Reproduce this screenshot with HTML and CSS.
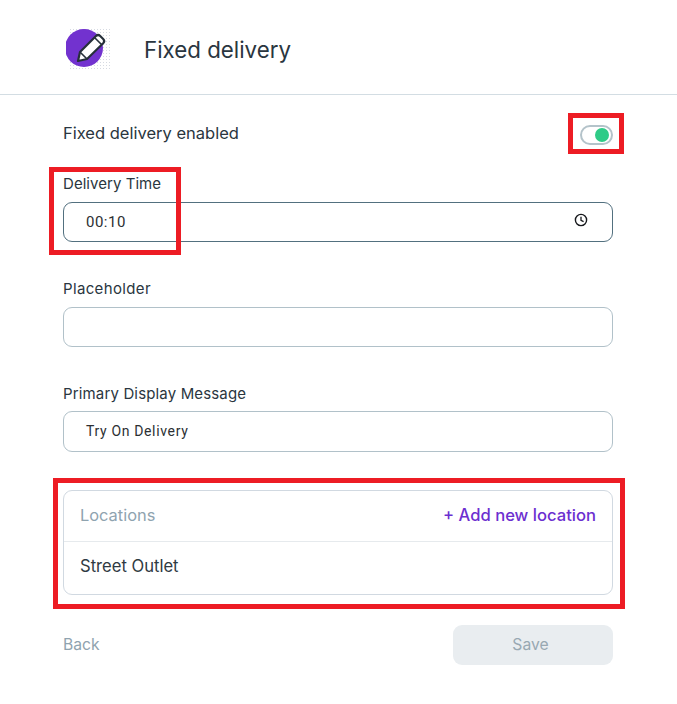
FILE: index.html
```html
<!DOCTYPE html>
<html lang="en">
<head>
<meta charset="utf-8">
<title>Fixed delivery</title>
<link rel="stylesheet" href="styles.css">
</head>
<body>
<div class="page">
  <header class="header">
    <svg class="logo" width="46" height="46" viewBox="0 0 46 46" aria-hidden="true">
      <defs>
        <pattern id="dots" width="3" height="3" patternUnits="userSpaceOnUse">
          <rect x="1" y="1" width="1" height="1" fill="#d6dae2"/>
        </pattern>
      </defs>
      <rect x="3" y="2" width="43" height="43" fill="url(#dots)"/>
      <circle cx="18" cy="23" r="19" fill="#7232cf"/>
      <path d="M14 27 L30 11 a3 3 0 0 1 4.200 0 l3 3 a3 3 0 0 1 0 4.200 L21 34 L12 36 Z" fill="#fff" stroke="#26303a" stroke-width="2.200" stroke-linejoin="round"/>
      <path d="M28.500 12.500 L35.500 19.500 M14 27 L21 34" fill="none" stroke="#26303a" stroke-width="1.600"/>
    </svg>
    <h1 class="title">Fixed delivery</h1>
  </header>
  <main class="form">
    <div class="toggle-row">
      <span class="toggle-label">Fixed delivery enabled</span>
      <span class="toggle"><span class="knob"></span></span>
    </div>
    <div class="field field-time">
      <label class="label">Delivery Time</label>
      <div class="input input-active">
        <span class="value">00:10</span>
        <svg class="clock" width="14" height="14" viewBox="0 0 14 14" aria-hidden="true">
          <circle cx="7" cy="7" r="5.600" fill="none" stroke="#16181c" stroke-width="1.400"/>
          <path d="M7 3.800 V7.300 L9.600 8.600" fill="none" stroke="#16181c" stroke-width="1.300"/>
        </svg>
      </div>
    </div>
    <div class="field field-placeholder">
      <label class="label label-wide">Placeholder</label>
      <div class="input"></div>
    </div>
    <div class="field field-message">
      <label class="label">Primary Display Message</label>
      <div class="input input-tall"><span class="value value-small">Try On Delivery</span></div>
    </div>
    <section class="card">
      <div class="card-head">
        <span class="card-title">Locations</span>
        <a class="add-link">+ Add new location</a>
      </div>
      <div class="card-row">Street Outlet</div>
    </section>
    <div class="actions">
      <a class="back">Back</a>
      <button class="save" type="button">Save</button>
    </div>
  </main>
  <div class="mark mark-toggle"></div>
  <div class="mark mark-time"></div>
  <div class="mark mark-locations"></div>
</div>
</body>
</html>
```
FILE: styles.css
```css
* { box-sizing: border-box; }
html, body { margin: 0; padding: 0; background: #fff; }
body { font-family: "Inter", "Liberation Sans", sans-serif; color: #26323c; }
.page { position: relative; width: 677px; height: 704px; overflow: hidden; }
.header {
  height: 95px;
  border-bottom: 1px solid #d3dde3;
  padding: 25px 0 0 66px;
  display: flex;
  align-items: flex-start;
}
.logo { flex: none; display: block; }
.title { margin: 9px 0 0 32px; font-size: 22.3px; line-height: 32px; font-weight: 400; color: #2a3640; }
.form { padding: 0 64px 0 63px; }
.toggle-row { height: 38px; margin-top: 20px; display: flex; justify-content: space-between; align-items: flex-start; }
.toggle-label { font-size: 16.5px; line-height: 36px; color: #2a3640; }
.toggle {
  width: 33px; height: 20px; margin: 10px 0 0 0;
  border: 2px solid #b4c3ca; border-radius: 10px; display: flex; align-items: center; justify-content: flex-end; padding-right: 2px;
}
.knob { width: 14px; height: 14px; border-radius: 50%; background: #2fcb87; }
.field { display: flex; flex-direction: column; }
.field-time { margin-top: 21px; }
.field-placeholder { margin-top: 37px; }
.field-message { margin-top: 37px; }
.label { font-size: 15px; letter-spacing: .05px; line-height: 20px; height: 20px; margin-bottom: 8px; color: #2a3640; }
.label-wide { letter-spacing: .35px; }
.field-message .label { margin-bottom: 7px; letter-spacing: .15px; }
.input {
  height: 40px; border: 1px solid #b1c1c9; border-radius: 9px;
  padding: 0 24px 0 22px; display: flex; align-items: center; justify-content: space-between;
}
.input-tall { height: 41px; padding-bottom: 2px; }
.input-active { border-color: #52707f; }
.clock { margin-top: -4px; }
.value { font-family: "Roboto", "Liberation Sans", sans-serif; font-size: 15px; letter-spacing: .5px; color: #2c2f33; }
.value-small { font-size: 14px; letter-spacing: .65px; }
.card { margin-top: 38px; height: 105px; border: 1px solid #d1d9e1; border-radius: 9px; }
.card-head {
  height: 51px; border-bottom: 1px solid #e6eaed; padding: 0 16px 2px;
  display: flex; justify-content: space-between; align-items: center;
}
.card-title { font-size: 16.4px; color: #8fa3af; }
.add-link { font-size: 16.6px; font-weight: 500; color: #6c2fd0; }
.card-row { padding: 0 16px 2px; height: 50px; display: flex; align-items: center; font-size: 16.6px; color: #2f3a42; }
.actions { margin-top: 30px; display: flex; justify-content: space-between; align-items: center; }
.back { font-size: 15.7px; color: #8fa3af; padding-bottom: 2px; }
.save {
  width: 160px; height: 40px; border: 0; border-radius: 9px; background: #e9edf0;
  font-family: inherit; font-size: 15.7px; color: #98a8b2; padding: 0 5px 2px 0;
}
.mark { position: absolute; border: 5px solid #ed1c24; pointer-events: none; }
.mark-toggle { left: 568px; top: 113px; width: 56px; height: 41px; }
.mark-time { left: 49px; top: 167px; width: 132px; height: 88px; }
.mark-locations { left: 53px; top: 478px; width: 572px; height: 131px; }
```
